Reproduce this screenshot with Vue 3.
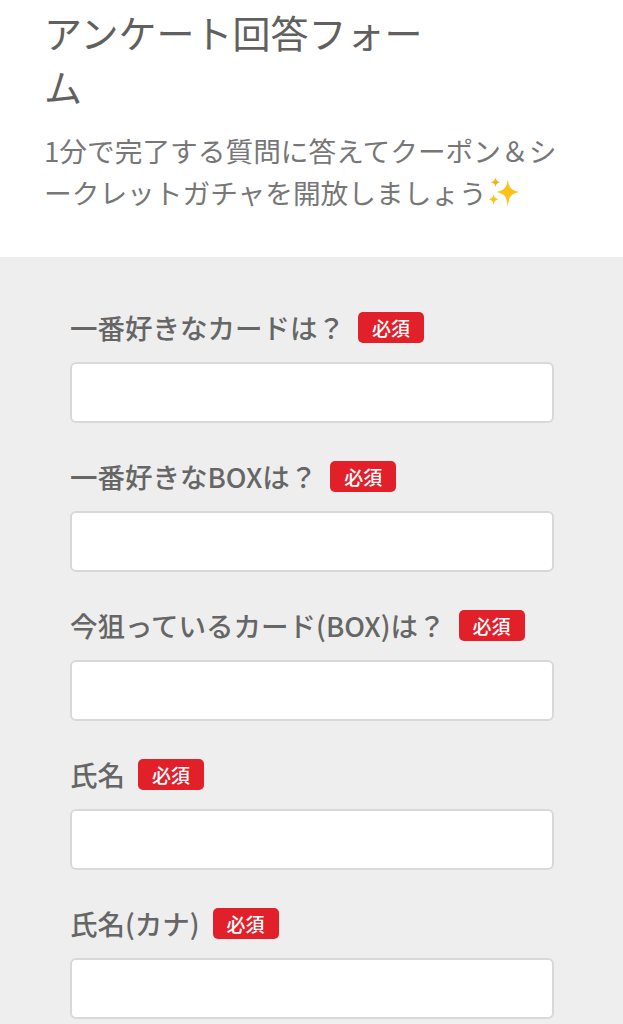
<script setup>
const fields = [
  { label: '一番好きなカードは\uFF1F' },
  { label: '一番好きなBOXは\uFF1F' },
  { label: '今狙っているカード(BOX)は\uFF1F' },
  { label: '氏名' },
  { label: '氏名(カナ)' },
]
</script>

<template>
  <div class="page">
    <header class="head">
      <h1 class="title">アンケート回答フォーム</h1>
      <p class="lead">1分で完了する質問に答えてクーポン&#xFF06;シークレットガチャを開放しましょう<svg class="sparkle" viewBox="0 0 36 36" aria-hidden="true"><path fill="#fcc21b" d="M22 3c1 9 3 12 12 14-9 2-11 5-12 16-1-11-3-14-12-16 9-2 11-5 12-14z"/><path fill="#f5b21a" d="M9 1c.5 3.500 1.500 4.500 5 5.500-3.500 1-4.500 2-5 5.500-.5-3.500-1.500-4.500-5-5.500 3.500-1 4.500-2 5-5.500z"/><path fill="#fcc21b" d="M7 19c.6 3.500 1.800 4.700 5.500 5.500C8.800 25.300 7.600 26.500 7 31c-.6-4.500-1.800-5.700-5.500-6.500C5.200 23.700 6.400 22.500 7 19z"/></svg></p>
    </header>
    <form class="form" @submit.prevent>
      <div v-for="f in fields" :key="f.label" class="field">
        <div class="label-row">
          <label class="label">{{ f.label }}</label>
          <span class="badge">必須</span>
        </div>
        <input class="input" type="text" />
      </div>
    </form>
  </div>
</template>

<style>
html, body { margin: 0; background: #fff; overflow: hidden; }
</style>

<style scoped>
.page {
  width: 623px;
  height: 1024px;
  overflow: hidden;
  display: flex;
  flex-direction: column;
  font-family: "Noto Sans CJK JP", "Noto Sans", sans-serif;
  color: #666;
}
.head {
  flex: none;
  height: 257px;
  box-sizing: border-box;
  padding: 5px 44px 0;
  background: #fff;
}
.title {
  margin: 0;
  width: 390px;
  font-size: 38px;
  line-height: 54px;
  font-weight: 400;
  color: #606060;
}
.lead {
  margin: 16px 0 0;
  width: 525px;
  font-size: 27.7px;
  line-height: 42px;
  color: #777;
}
.sparkle {
  width: 34px;
  height: 34px;
  vertical-align: -6px;
}
.form {
  flex: 1;
  background: #eee;
  padding: 52px 69px 0 70px;
  display: flex;
  flex-direction: column;
  gap: 35px;
}
.field {
  display: flex;
  flex-direction: column;
  gap: 16px;
}
.label-row {
  display: flex;
  align-items: center;
  gap: 13px;
  height: 37px;
}
.label {
  font-size: 27.5px;
  font-weight: 500;
  color: #666;
  line-height: 37px;
}
.badge {
  display: inline-flex;
  align-items: center;
  justify-content: center;
  width: 66px;
  height: 31px;
  border-radius: 5px;
  background: #e2202a;
  color: #fff;
  font-size: 19px;
  font-weight: 500;
}
.input {
  box-sizing: border-box;
  display: block;
  width: 484px;
  height: 61px;
  margin: 0;
  padding: 0 12px;
  border: 2px solid #d8d8d8;
  border-radius: 6px;
  background: #fff;
  outline: none;
}
</style>
